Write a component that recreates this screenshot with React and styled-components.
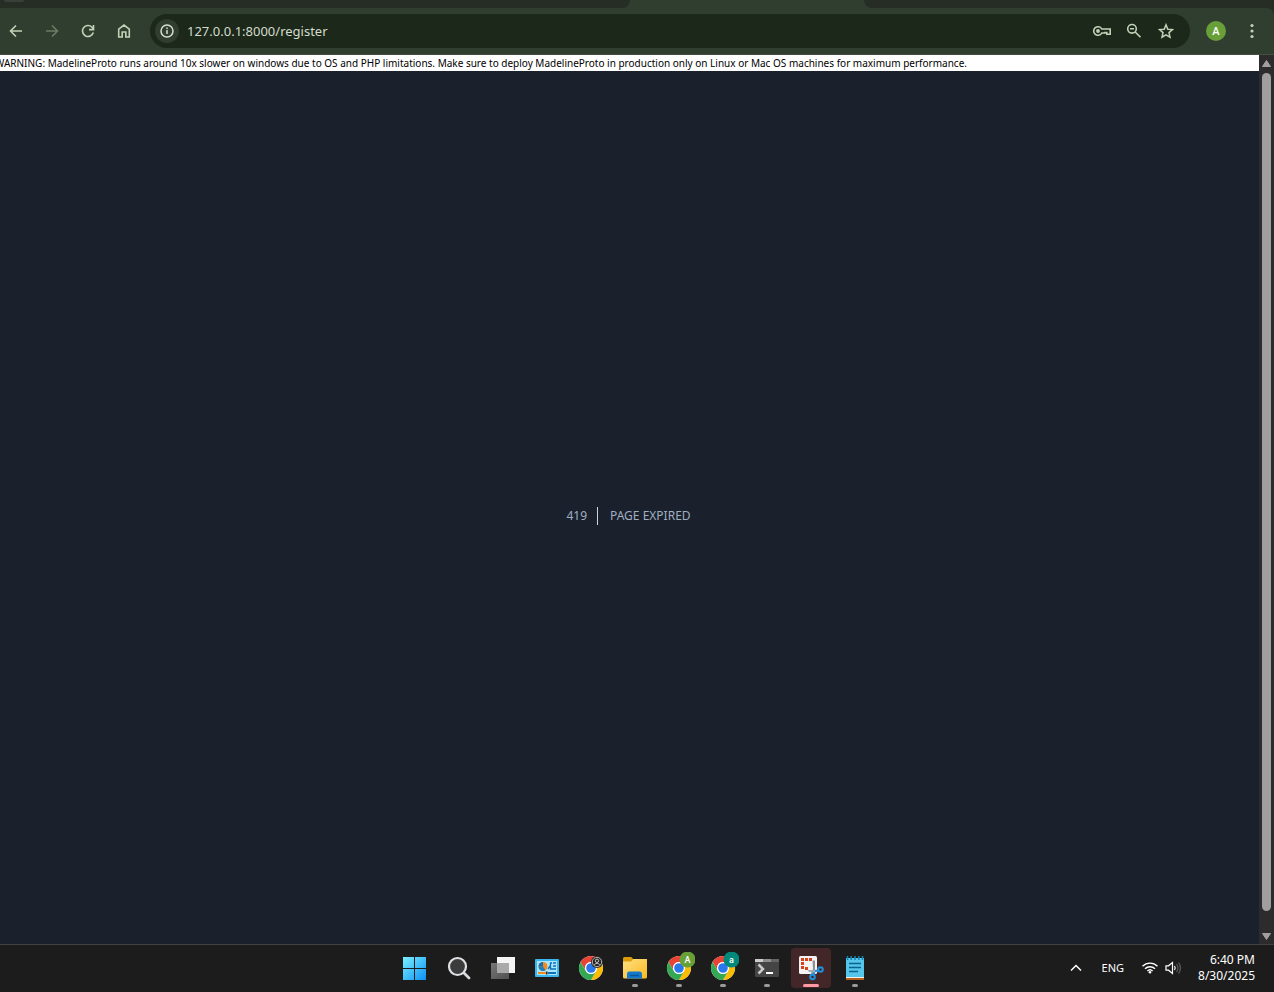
import React from 'react';
import styled, { createGlobalStyle } from 'styled-components';

const GlobalStyle = createGlobalStyle`
  * {
    box-sizing: border-box;
  }
  body {
    margin: 0;
    background: #1a202c;
    font-family: 'Noto Sans', 'Open Sans', sans-serif;
  }
  button {
    padding: 0;
    border: 0;
    background: none;
    color: inherit;
    font: inherit;
  }
`;

const Screen = styled.div`
  display: flex;
  flex-direction: column;
  height: 100vh;
`;

// browser chrome
const TabStrip = styled.div`
  display: flex;
  height: 8px;
  flex: none;
  background: #303e2f;
`;

const TabGap = styled.div`
  flex: ${(p) => p.$grow} 1 0;
  background: #252d24;
  border-radius: ${(p) => (p.$side === 'left' ? '0 0 10px 0' : '0 0 0 10px')};
  overflow: hidden;
`;

const ActiveTab = styled.div`
  width: 234px;
`;

const TabSearch = styled.div`
  width: 20px;
  height: 2px;
  margin-left: 4px;
  border-radius: 0 0 8px 8px;
  background: #3b3f3b;
`;

const ToolbarBack = styled.div`
  flex: none;
  background: #252d24;
`;

const Toolbar = styled.header`
  display: flex;
  align-items: center;
  gap: 10px;
  padding: 6px 6px 6px 0;
  background: #303e2f;
  border-bottom: 1px solid #444f43;
  border-top-right-radius: 8px;
`;

const ToolGroup = styled.div`
  display: flex;
  gap: 4px;
`;

const ToolButton = styled.button`
  display: flex;
  align-items: center;
  justify-content: center;
  width: 32px;
  height: 32px;
  color: ${(p) => (p.$dim ? '#6b7d66' : '#c0d3b8')};
`;

const AddressBar = styled.div`
  display: flex;
  flex: 1;
  align-items: center;
  height: 34px;
  padding: 0 8px 0 5px;
  border-radius: 17px;
  background: #1c2819;
`;

const SiteInfo = styled.button`
  display: flex;
  align-items: center;
  justify-content: center;
  width: 24px;
  height: 24px;
  border-radius: 50%;
  background: #303e2f;
  color: #d5dfd0;
`;

const AddressInput = styled.input`
  flex: 1;
  min-width: 0;
  padding: 0 8px;
  border: 0;
  outline: 0;
  background: none;
  color: #d3dccd;
  font-family: inherit;
  font-size: 13px;
  line-height: 20px;
`;

const Avatar = styled.span`
  display: flex;
  align-items: center;
  justify-content: center;
  width: 20px;
  height: 20px;
  border-radius: 50%;
  background: #689f38;
  color: #fff;
  font-family: Roboto, sans-serif;
  font-size: 11px;
  font-weight: 500;
`;

// page
const Viewport = styled.div`
  display: flex;
  flex: 1;
  min-height: 0;
`;

const Page = styled.main`
  flex: 1;
  min-width: 0;
  overflow: hidden;
  background: #1a202c;
`;

const Warning = styled.p`
  margin: 0;
  background: #fff;
  color: #000;
  font-size: 10px;
  line-height: 16px;
  text-indent: -5px;
  white-space: nowrap;
`;

const ErrorStage = styled.section`
  display: flex;
  align-items: center;
  justify-content: center;
  height: 100%;
  color: #a0aec0;
  font-size: 12px;
  line-height: 18px;
  text-transform: uppercase;
`;

const ErrorCode = styled.span`
  padding: 0 10px;
  border-right: 1px solid #cbd5e0;
`;

const ErrorText = styled.span`
  padding: 0 12px;
`;

const Scrollbar = styled.div`
  display: flex;
  flex-direction: column;
  align-items: center;
  width: 15px;
  background: #2c2c2c;
`;

const ScrollArrow = styled.button`
  display: flex;
  align-items: center;
  justify-content: center;
  width: 15px;
  height: 16px;
`;

const ScrollTrack = styled.div`
  flex: 1;
  width: 9px;
  padding: 2px 0 17px;
`;

const ScrollThumb = styled.div`
  height: 100%;
  border-radius: 5px;
  background: #9f9f9f;
`;

// windows taskbar
const Taskbar = styled.footer`
  display: grid;
  grid-template-columns: 1fr auto 1fr;
  align-items: center;
  flex: none;
  height: 48px;
  padding: 0 4px 1px 0;
  border-top: 1px solid #414141;
  background: #1c1c1c;
  color: #fff;
`;

const AppList = styled.nav`
  display: flex;
  grid-column: 2;
  gap: 4px;
`;

const AppButton = styled.button`
  display: flex;
  flex-direction: column;
  align-items: center;
  width: 40px;
  height: 40px;
  padding-top: 4px;
  border-radius: 4px;
  background: ${(p) => (p.$active ? '#432728' : 'none')};

  &::after {
    content: '';
    width: ${(p) => (p.$active ? '16px' : '6px')};
    height: 3px;
    border-radius: 2px;
    background: ${(p) => (p.$active ? '#ff99a4' : p.$open ? '#9a9a9a' : 'transparent')};
  }
`;

const Tray = styled.div`
  display: flex;
  align-items: center;
  justify-content: flex-end;
  padding-right: 15px;
  font-size: 11px;
  line-height: 16px;
`;

const TrayButton = styled.button`
  display: flex;
  align-items: center;
  gap: 7px;
  padding: 0 9px;
`;

const Clock = styled.button`
  display: flex;
  flex-direction: column;
  align-items: flex-end;
  padding-left: 8px;
  font-size: 12px;
`;

const ChromeIcon = ({ badge, color }) => (
  <svg width="32" height="32" viewBox="0 0 32 32" aria-hidden="true">
    <circle cx="16" cy="16" r="12" fill="#fff" />
    <path d="M5.6 10A12 12 0 0 1 26.4 10L16 10A6 6 0 0 0 10.8 19Z" fill="#ea4335" />
    <path d="M26.4 10A12 12 0 0 1 16 28L21.2 19A6 6 0 0 0 16 10Z" fill="#fbbc04" />
    <path d="M16 28A12 12 0 0 1 5.6 10L10.8 19A6 6 0 0 0 21.2 19Z" fill="#34a853" />
    <circle cx="16" cy="16" r="6" fill="#fff" />
    <circle cx="16" cy="16" r="4.8" fill="#2a78ee" />
    {badge ? (
      <>
        <circle cx="24.5" cy="7.5" r="8" fill={color} />
        <text x="24.5" y="10.7" fontFamily="Roboto, sans-serif" fontSize="9" fontWeight="500" textAnchor="middle" fill="#fff">
          {badge}
        </text>
      </>
    ) : (
      <>
        <circle cx="22" cy="10" r="6" fill="#242424" />
        <circle cx="22" cy="10" r="4.7" fill="none" stroke="#b4b4b4" />
        <circle cx="22" cy="8.8" r="1.7" fill="none" stroke="#c4c4c4" />
        <path d="M19 13c1-2 5-2 6 0" fill="none" stroke="#c4c4c4" />
      </>
    )}
  </svg>
);

const StartIcon = () => (
  <svg width="32" height="32" viewBox="0 0 32 32" aria-hidden="true">
    <defs>
      <linearGradient id="win" x1="0" y1="0" x2="1" y2="1">
        <stop offset="0" stopColor="#7bf0ff" />
        <stop offset="1" stopColor="#0d8ff5" />
      </linearGradient>
    </defs>
    <path d="M4 5h11v11H4zM16 5h11v11H16zM4 17h11v11H4zM16 17h11v11H16z" fill="url(#win)" />
  </svg>
);

const SearchIcon = () => (
  <svg width="32" height="32" viewBox="0 0 32 32" aria-hidden="true">
    <path d="M20.500 20.500l5.500 5.500" stroke="#d6d9dd" strokeWidth="2.800" strokeLinecap="round" />
    <circle cx="14.500" cy="14.500" r="8.500" fill="#3c3c3c" stroke="#dfe1e4" strokeWidth="2.200" />
  </svg>
);

const TaskViewIcon = () => (
  <svg width="32" height="32" viewBox="0 0 32 32" aria-hidden="true">
    <defs>
      <linearGradient id="front" x1="0" y1="0" x2="1" y2="1">
        <stop offset="0" stopColor="#777" />
        <stop offset="1" stopColor="#505050" />
      </linearGradient>
    </defs>
    <path d="M10 5h18v16H10z" fill="#f4f4f4" />
    <path d="M4 11h18v16H4z" fill="url(#front)" />
    <path d="M10 11h12v10H10z" fill="#a9a9a9" />
  </svg>
);

const PanelIcon = () => (
  <svg width="32" height="32" viewBox="0 0 32 32" aria-hidden="true">
    <rect x="4" y="7" width="24" height="18" rx="1" fill="#38b6ee" />
    <path d="M6 9h20v14H6z" fill="#a9e6fb" />
    <circle cx="12" cy="14.500" r="4.500" fill="#f28b1c" />
    <path d="M12 14.500H7.500a4.500 4.500 0 0 1 4.500-4.500z" fill="#0f6fb8" />
    <path d="M7.500 14.500a4.500 4.500 0 0 0 7 3.700L12 14.500z" fill="#1b7fc4" />
    <path d="M17 17l2.500-3.500V11H21M22 11h3M22 14h3M19.500 14v3H25" stroke="#0f6fb8" strokeWidth="1.300" fill="none" />
    <path d="M7 21h9" stroke="#f28b1c" strokeWidth="2" />
    <path d="M17 21h8" stroke="#0f6fb8" strokeWidth="2" />
    <path d="M15 19.500h1.500v3H15z" fill="#2b2b2b" />
  </svg>
);

const FolderIcon = () => (
  <svg width="32" height="32" viewBox="0 0 32 32" aria-hidden="true">
    <defs>
      <linearGradient id="folder" x1="0" y1="0" x2="1" y2="1">
        <stop offset="0" stopColor="#ffe083" />
        <stop offset="1" stopColor="#f9b921" />
      </linearGradient>
    </defs>
    <path d="M4 6.500A1.500 1.500 0 0 1 5.500 5h6.700l2 2H26.500A1.500 1.500 0 0 1 28 8.500V14H4z" fill="#dd9b0b" />
    <path d="M4 9.500h8l2.500-2.500H28V25a1.500 1.500 0 0 1-1.500 1.500h-21A1.500 1.500 0 0 1 4 25z" fill="url(#folder)" />
    <path d="M8 26.500V22a2.500 2.500 0 0 1 2.500-2.500h10A2.500 2.500 0 0 1 23 22v4.500z" fill="#1479c9" />
    <path d="M11 23.500h9" stroke="#0b559b" strokeWidth="1.500" />
  </svg>
);

const TerminalIcon = () => (
  <svg width="32" height="32" viewBox="0 0 32 32" aria-hidden="true">
    <rect x="4" y="7" width="24" height="18" rx="1" fill="#454545" />
    <path d="M4 7h8v3H4z" fill="#ccc" />
    <path d="M12 7h8v3h-8z" fill="#8f8f8f" />
    <path d="M20 7h8v3h-8z" fill="#656565" />
    <path d="M7.500 12.500l4.500 4.500-4.500 4.500" fill="none" stroke="#ccc" strokeWidth="2.500" />
    <path d="M15 21h7" stroke="#fff" strokeWidth="2" />
  </svg>
);

const SnipIcon = () => (
  <svg width="32" height="32" viewBox="0 0 32 32" aria-hidden="true">
    <rect x="4" y="4" width="18" height="18" rx="1.500" fill="#f5f3f3" />
    <path d="M6 6h3v3H6zM10 6h3v3h-3zM14 6h3v3h-3zM6 10h3v3H6zM6 14h3v3H6zM10 15h3v3h-3z" fill="#d8401b" />
    <path d="M17.500 8.500h2.500V18l-3 5.500-1.500-1L18 17z" fill="#8b9197" />
    <path d="M12.500 18h10.500v2H14z" fill="#a8adb2" />
    <circle cx="25.500" cy="17.500" r="2.300" fill="none" stroke="#1f91dc" strokeWidth="2" />
    <circle cx="17.500" cy="25" r="2.300" fill="none" stroke="#1f91dc" strokeWidth="2" />
    <path d="M20 19l3.500-.5M18.500 22.700l1-2.500" stroke="#1f91dc" strokeWidth="2" />
  </svg>
);

const NotepadIcon = () => (
  <svg width="32" height="32" viewBox="0 0 32 32" aria-hidden="true">
    <path d="M7 25h18v3H7z" fill="#b65d1a" />
    <path d="M7 24.500h18v1.500H7z" fill="#f1f1f1" />
    <path d="M7 6h18v19H7z" fill="#55c6ea" />
    <path d="M8.500 4v4M12.200 4v4M16 4v4M19.800 4v4M23.500 4v4" stroke="#1584b4" strokeWidth="1.500" />
    <path d="M10 11.500h12M10 15.500h12M10 19.500h9" stroke="#0a628d" strokeWidth="1.600" />
  </svg>
);

const apps = [
  { name: 'Start', icon: <StartIcon /> },
  { name: 'Search', icon: <SearchIcon /> },
  { name: 'Task View', icon: <TaskViewIcon /> },
  { name: 'Control Panel', icon: <PanelIcon /> },
  { name: 'Chrome guest', icon: <ChromeIcon /> },
  { name: 'File Explorer', icon: <FolderIcon />, open: true },
  { name: 'Chrome A', icon: <ChromeIcon badge="A" color="#689f38" />, open: true },
  { name: 'Chrome a', icon: <ChromeIcon badge="a" color="#00897b" />, open: true },
  { name: 'Terminal', icon: <TerminalIcon />, open: true },
  { name: 'Snipping Tool', icon: <SnipIcon />, active: true },
  { name: 'Notepad', icon: <NotepadIcon />, open: true },
];

const LineIcon = ({ d, width = 1.6, children }) => (
  <svg width="16" height="16" viewBox="0 0 16 16" fill="none" stroke="currentColor" strokeWidth={width} aria-hidden="true">
    {d && <path d={d} />}
    {children}
  </svg>
);

function BrowserToolbar() {
  return (
    <Toolbar>
      <ToolGroup>
        <ToolButton aria-label="Back">
          <LineIcon d="M14 8H3M8 2.500L2.500 8 8 13.500" />
        </ToolButton>
        <ToolButton $dim aria-label="Forward">
          <LineIcon d="M2 8h11M8 2.500L13.500 8 8 13.500" />
        </ToolButton>
        <ToolButton aria-label="Reload">
          <LineIcon d="M13.300 9.500A5.500 5.500 0 1 1 12 4.200L13.500 6M13.500 2v4.600H9" />
        </ToolButton>
        <ToolButton aria-label="Home">
          <LineIcon d="M2.700 14V6.200L8 2l5.300 4.200V14H9.800V9H6.200v5z" />
        </ToolButton>
      </ToolGroup>
      <AddressBar>
        <SiteInfo aria-label="Site information">
          <LineIcon width={1.5}>
            <circle cx="8" cy="8" r="6" />
            <path d="M8 7v4M8 4.500v1.500" />
          </LineIcon>
        </SiteInfo>
        <AddressInput aria-label="Address" defaultValue="127.0.0.1:8000/register" />
        <ToolButton aria-label="Passwords">
          <svg width="20" height="16" viewBox="0 0 20 16" fill="none" stroke="currentColor" strokeWidth="1.600" aria-hidden="true">
            <path d="M9.800 6H18.200V11.300H14.800V9.500H13V10H9.800A4.300 4.300 0 1 1 9.800 6Z" />
            <circle cx="6" cy="8" r="1.900" fill="currentColor" stroke="none" />
          </svg>
        </ToolButton>
        <ToolButton aria-label="Zoom">
          <LineIcon>
            <circle cx="6" cy="5.800" r="4.300" />
            <path d="M9.200 9l5.300 5.300M4 5.800h4" />
          </LineIcon>
        </ToolButton>
        <ToolButton aria-label="Bookmark">
          <LineIcon width={1.5} d="M8 1.800l1.800 4.400 4.700.4-3.500 3 1 4.600L8 11.800 4 14.200l1-4.600-3.500-3 4.700-.4z" />
        </ToolButton>
      </AddressBar>
      <ToolGroup>
        <ToolButton aria-label="Profile">
          <Avatar>A</Avatar>
        </ToolButton>
        <ToolButton aria-label="Menu">
          <svg width="16" height="16" viewBox="0 0 16 16" fill="currentColor" aria-hidden="true">
            <circle cx="8" cy="2.500" r="1.600" />
            <circle cx="8" cy="8" r="1.600" />
            <circle cx="8" cy="13.500" r="1.600" />
          </svg>
        </ToolButton>
      </ToolGroup>
    </Toolbar>
  );
}

function App() {
  return (
    <Screen>
      <GlobalStyle />
      <TabStrip>
        <TabGap $grow={63} $side="left">
          <TabSearch />
        </TabGap>
        <ActiveTab />
        <TabGap $grow={41} $side="right" />
      </TabStrip>
      <ToolbarBack>
        <BrowserToolbar />
      </ToolbarBack>

      <Viewport>
        <Page>
          <Warning>
            WARNING: MadelineProto runs around 10x slower on windows due to OS and PHP limitations. Make sure to deploy MadelineProto in production only on Linux or Mac OS machines for maximum performance.
          </Warning>
          <ErrorStage>
            <ErrorCode>419</ErrorCode>
            <ErrorText>Page Expired</ErrorText>
          </ErrorStage>
        </Page>
        <Scrollbar>
          <ScrollArrow aria-label="Scroll up">
            <svg width="9" height="7" viewBox="0 0 9 7" aria-hidden="true">
              <path d="M4.500 0.500L8.500 6.500H0.500z" fill="#9f9f9f" stroke="#9f9f9f" strokeLinejoin="round" />
            </svg>
          </ScrollArrow>
          <ScrollTrack>
            <ScrollThumb />
          </ScrollTrack>
          <ScrollArrow aria-label="Scroll down">
            <svg width="9" height="7" viewBox="0 0 9 7" aria-hidden="true">
              <path d="M4.500 6.500L8.500 0.500H0.500z" fill="#9f9f9f" stroke="#9f9f9f" strokeLinejoin="round" />
            </svg>
          </ScrollArrow>
        </Scrollbar>
      </Viewport>

      <Taskbar>
        <AppList>
          {apps.map((app) => (
            <AppButton key={app.name} aria-label={app.name} $open={app.open} $active={app.active}>
              {app.icon}
            </AppButton>
          ))}
        </AppList>
        <Tray>
          <TrayButton aria-label="Show hidden icons">
            <LineIcon width={1.5} d="M3 10.500l5-5 5 5" />
          </TrayButton>
          <TrayButton>ENG</TrayButton>
          <TrayButton aria-label="Network and volume">
            <LineIcon width={1.4}>
              <path d="M.5 6.300c4.200-4.200 10.800-4.200 15 0M3 8.800c2.800-2.800 7.200-2.800 10 0M5.400 11.100c1.500-1.500 3.700-1.500 5.200 0" />
              <circle cx="8" cy="12.300" r="1.300" fill="currentColor" stroke="none" />
            </LineIcon>
            <LineIcon width={1.2}>
              <path d="M1 5.800h2.500L7.500 2.500v11L3.500 10.200H1zM9.500 6q1.500 2 0 4" />
              <path d="M11.500 4q3 4 0 8M13.500 2.500q4 5.500 0 11" stroke="#5a5a5a" />
            </LineIcon>
          </TrayButton>
          <Clock>
            <span>6:40 PM</span>
            <span>8/30/2025</span>
          </Clock>
        </Tray>
      </Taskbar>
    </Screen>
  );
}

export default App;
